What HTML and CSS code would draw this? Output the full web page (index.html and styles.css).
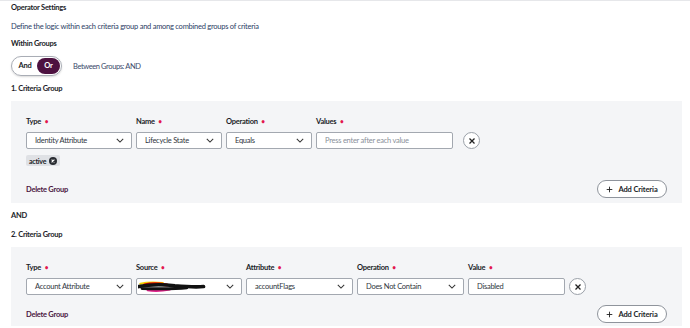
FILE: index.html
```html
<!DOCTYPE html>
<html lang="en">
<head>
    <meta charset="UTF-8">
    <title>Operator Settings</title>
    <link rel="stylesheet" href="styles.css">
</head>
<body>
    <div class="page">
        <h2 class="title">Operator Settings</h2>
        <p class="desc">Define the logic within each criteria group and among combined groups of criteria</p>
        <h3 class="sub">Within Groups</h3>

        <div class="logic-row">
            <div class="toggle">
                <span class="opt">And</span>
                <span class="opt active">Or</span>
            </div>
            <span class="between">Between Groups: AND</span>
        </div>

        <h3 class="group-title">1. Criteria Group</h3>
        <section class="group">
            <div class="fields">
                <div class="field w-106">
                    <label>Type <span class="req">•</span></label>
                    <div class="select">Identity Attribute <svg class="chev" viewBox="0 0 10 6"><path d="M1 1l4 4 4-4"/></svg></div>
                </div>
                <div class="field w-86">
                    <label>Name <span class="req">•</span></label>
                    <div class="select">Lifecycle State <svg class="chev" viewBox="0 0 10 6"><path d="M1 1l4 4 4-4"/></svg></div>
                </div>
                <div class="field w-86">
                    <label>Operation <span class="req">•</span></label>
                    <div class="select">Equals <svg class="chev" viewBox="0 0 10 6"><path d="M1 1l4 4 4-4"/></svg></div>
                </div>
                <div class="field w-137">
                    <label>Values <span class="req">•</span></label>
                    <div class="input placeholder">Press enter after each value</div>
                </div>
                <button class="remove remove-far"><svg viewBox="0 0 8 8"><path d="M1.5 1.5l5 5M6.5 1.5l-5 5"/></svg></button>
            </div>
            <div class="chips">
                <span class="chip">active <span class="chip-x"><svg viewBox="0 0 8 8"><path d="M2.6 2.6l2.8 2.8M5.4 2.6l-2.8 2.8"/></svg></span></span>
            </div>
            <div class="group-foot">
                <a class="delete">Delete Group</a>
                <button class="add"><svg viewBox="0 0 10 10"><path d="M5 1v8M1 5h8"/></svg>Add Criteria</button>
            </div>
        </section>

        <p class="and">AND</p>

        <h3 class="group-title title-2">2. Criteria Group</h3>
        <section class="group group-2">
            <div class="fields">
                <div class="field w-106">
                    <label>Type <span class="req">•</span></label>
                    <div class="select">Account Attribute <svg class="chev" viewBox="0 0 10 6"><path d="M1 1l4 4 4-4"/></svg></div>
                </div>
                <div class="field w-106">
                    <label>Source <span class="req">•</span></label>
                    <div class="select">
                        <svg class="scribble" viewBox="0 0 90 14">
                            <path d="M3 3c8-2 18-2 28-1" stroke="#f2d200" stroke-width="2.6"/>
                            <path d="M8 4.5c9-2 17-2 28 0" stroke="#e20000" stroke-width="4"/>
                            <path d="M12 11c9 1.5 18 1 28-1" stroke="#e0208a" stroke-width="2.6"/>
                            <path d="M1 6.5c15-3 30-3 45-1c12 1 24 2 36 1" stroke="#111" stroke-width="4.4"/>
                            <path d="M5 9c16 0 36 1 56-1" stroke="#111" stroke-width="3.6"/>
                        </svg>
                        <svg class="chev" viewBox="0 0 10 6"><path d="M1 1l4 4 4-4"/></svg>
                    </div>
                </div>
                <div class="field w-107">
                    <label>Attribute <span class="req">•</span></label>
                    <div class="select">accountFlags <svg class="chev" viewBox="0 0 10 6"><path d="M1 1l4 4 4-4"/></svg></div>
                </div>
                <div class="field w-107">
                    <label>Operation <span class="req">•</span></label>
                    <div class="select">Does Not Contain <svg class="chev" viewBox="0 0 10 6"><path d="M1 1l4 4 4-4"/></svg></div>
                </div>
                <div class="field w-97">
                    <label>Value <span class="req">•</span></label>
                    <div class="input">Disabled</div>
                </div>
                <button class="remove"><svg viewBox="0 0 8 8"><path d="M1.5 1.5l5 5M6.5 1.5l-5 5"/></svg></button>
            </div>
            <div class="group-foot foot-2">
                <a class="delete">Delete Group</a>
                <button class="add"><svg viewBox="0 0 10 10"><path d="M5 1v8M1 5h8"/></svg>Add Criteria</button>
            </div>
        </section>
    </div>
</body>
</html>
```

FILE: styles.css
```css
body {
    margin: 0;
    background: #fff;
    font-family: 'Lato', 'Noto Sans', sans-serif;
    font-size: 7.5px;
    letter-spacing: -0.25px;
    color: #1b1d28;
    border-top: 1px solid #e6e7ea;
}

.page {
    padding: 0 8px 0 11px;
}

.title, .sub, .group-title, .and {
    margin: 0;
    font-size: 7.5px;
    font-weight: 700;
    height: 18px;
    line-height: 18px;
}

.title {
    line-height: 13px;
    height: 16px;
}

.desc {
    margin: 0;
    font-size: 7.5px;
    color: #2c3e66;
    height: 18px;
    line-height: 19px;
}

/* toggle And / Or */
.logic-row {
    display: flex;
    align-items: center;
    margin-top: 3px;
    height: 20px;
}

.toggle {
    display: flex;
    align-items: center;
    width: 51px;
    height: 20px;
    box-sizing: border-box;
    border: 1px solid #a9adb5;
    border-radius: 10px;
    box-shadow: 0 1px 2px rgba(0, 0, 0, 0.15);
    padding: 1px;
}

.opt {
    flex: 1;
    text-align: center;
    font-weight: 700;
    line-height: 16px;
    height: 16px;
    border-radius: 8px;
}

.opt.active {
    flex: 0 0 23px;
    background: #4d1140;
    color: #fff;
}

.between {
    margin-left: 11px;
    color: #3b4a6b;
    letter-spacing: -0.4px;
}

.group-title {
    margin-top: 3px;
    height: 22px;
    line-height: 20px;
}

.title-2 {
    margin-top: 0;
}

/* criteria group panel */
.group {
    background: #f4f5f7;
    padding: 15px 15px 6px 15px;
    height: 81px;
}

.group-2 {
    height: 64px;
    padding-bottom: 0;
}

.fields {
    display: flex;
    align-items: flex-end;
    gap: 4px;
}

.field label {
    display: block;
    font-weight: 700;
    height: 13px;
    line-height: 12px;
    margin-bottom: 3px;
}

.req {
    color: #e3174f;
    font-size: 6.5px;
    margin-left: 2px;
}

.w-106 { width: 106px; }
.w-107 { width: 107px; }
.w-86 { width: 86px; }
.w-137 { width: 137px; }
.w-97 { width: 97px; }

.select, .input {
    display: flex;
    align-items: center;
    justify-content: space-between;
    box-sizing: border-box;
    height: 17px;
    background: #fff;
    border: 1px solid #a3a8b0;
    border-radius: 2px;
    padding: 0 7px 0 8px;
    color: #2f3640;
}

.placeholder {
    color: #8a909a;
}

.chev {
    width: 8px;
    height: 5px;
    fill: none;
    stroke: #333;
    stroke-width: 1.3;
}

.scribble {
    width: 72px;
    height: 12px;
    margin-left: -7px;
    fill: none;
    stroke-linecap: round;
}

.remove {
    width: 17px;
    height: 17px;
    border-radius: 50%;
    border: 1px solid #9aa0a8;
    background: #fff;
    padding: 0;
    display: flex;
    align-items: center;
    justify-content: center;
}

.remove-far {
    margin-left: 6px;
}

.remove svg {
    width: 8px;
    height: 8px;
    fill: none;
    stroke: #222;
    stroke-width: 1.3;
}

.chips {
    display: flex;
    margin-top: 6px;
    height: 11px;
}

.chip {
    display: flex;
    align-items: center;
    gap: 3px;
    height: 11px;
    padding: 0 3px;
    background: #dfe1e5;
    border-radius: 2px;
    font-size: 7px;
    font-weight: 700;
}

.chip-x {
    width: 8px;
    height: 8px;
    border-radius: 50%;
    background: #2a2d33;
    display: flex;
}

.chip-x svg {
    width: 8px;
    height: 8px;
    fill: none;
    stroke: #fff;
    stroke-width: 1.1;
}

.group-foot {
    display: flex;
    align-items: center;
    justify-content: space-between;
    margin-top: 14px;
}

.foot-2 {
    margin-top: 10px;
}

.delete {
    font-weight: 700;
    color: #4a1542;
}

.add {
    display: flex;
    align-items: center;
    gap: 5px;
    height: 18px;
    width: 70px;
    justify-content: center;
    box-sizing: border-box;
    border: 1px solid #8f949c;
    border-radius: 9px;
    background: #fff;
    font-family: inherit;
    font-size: 7.5px;
    letter-spacing: -0.1px;
    font-weight: 700;
    color: #1b1d28;
    padding: 0;
}

.add svg {
    width: 7px;
    height: 7px;
    fill: none;
    stroke: #222;
    stroke-width: 1.3;
}

.and {
    margin-top: 4px;
}
```
